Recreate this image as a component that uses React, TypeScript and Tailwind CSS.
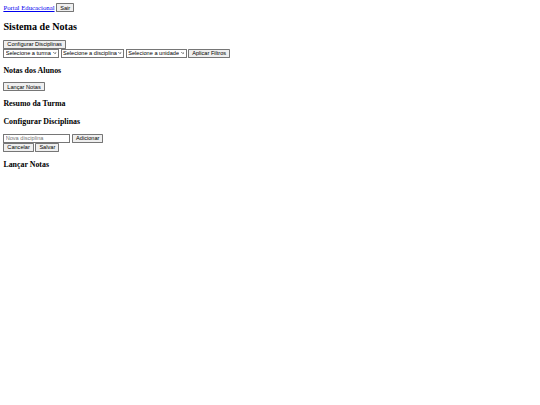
import React from "react";

const btn =
  "font-['Liberation_Sans',Arial,sans-serif] text-[13.333px] leading-[normal] text-black bg-[#efefef] border border-[#767676] rounded-[2px] px-[7px] py-[1px]";

function Chevron() {
  return (
    <svg
      className="absolute right-[5px] top-1/2 -translate-y-1/2 pointer-events-none"
      width="9"
      height="6"
      viewBox="0 0 9 6"
    >
      <path d="M1 1 L4.5 4.5 L8 1" fill="none" stroke="#000" strokeWidth="1.5" />
    </svg>
  );
}

function Select({ label }: { label: string }) {
  return (
    <span className="relative inline-flex">
      <select
        defaultValue=""
        className="appearance-none font-['Liberation_Sans',Arial,sans-serif] text-[13.333px] leading-[normal] text-black bg-white border border-[#767676] rounded-[0px] pl-[3px] pr-[15px] py-[1px]"
      >
        <option value="">{label}</option>
      </select>
      <Chevron />
    </span>
  );
}

export default function App() {
  return (
    <div className="[zoom:0.421875] w-[1280px] min-h-[960px] bg-white p-[8px] font-['Liberation_Serif','Times_New_Roman',serif] text-[16px] leading-[normal] text-black">
      <div className="flex items-center gap-[4px]">
        <a href="#" className="text-[#0000ee] underline">
          Portal Educacional
        </a>
        <button className={btn}>Sair</button>
      </div>
      <h2 className="text-[24px] font-bold my-[19.92px]">Sistema de Notas</h2>
      <div className="flex">
        <button className={btn}>Configurar Disciplinas</button>
      </div>
      <div className="flex items-center gap-[4px]">
        <Select label="Selecione a turma" />
        <Select label="Selecione a disciplina" />
        <Select label="Selecione a unidade" />
        <button className={btn}>Aplicar Filtros</button>
      </div>
      <h3 className="text-[18.72px] font-bold my-[18.72px]">Notas dos Alunos</h3>
      <div>
        <button className={btn}>Lançar Notas</button>
      </div>
      <h3 className="text-[18.72px] font-bold my-[18.72px]">Resumo da Turma</h3>
      <h3 className="text-[18.72px] font-bold mt-[21px] mb-[18.72px]">Configurar Disciplinas</h3>
      <div className="flex items-center gap-[4px]">
        <input
          type="text"
          placeholder="Nova disciplina"
          className="w-[159px] font-['Liberation_Sans',Arial,sans-serif] text-[13.333px] leading-[normal] text-black bg-white border border-[#767676] px-[3px] py-[1px] placeholder:text-[#757575]"
        />
        <button className={btn}>Adicionar</button>
      </div>
      <div className="flex gap-[4px]">
        <button className={btn}>Cancelar</button>
        <button className={btn}>Salvar</button>
      </div>
      <h3 className="text-[18.72px] font-bold my-[18.72px]">Lançar Notas</h3>
    </div>
  );
}
